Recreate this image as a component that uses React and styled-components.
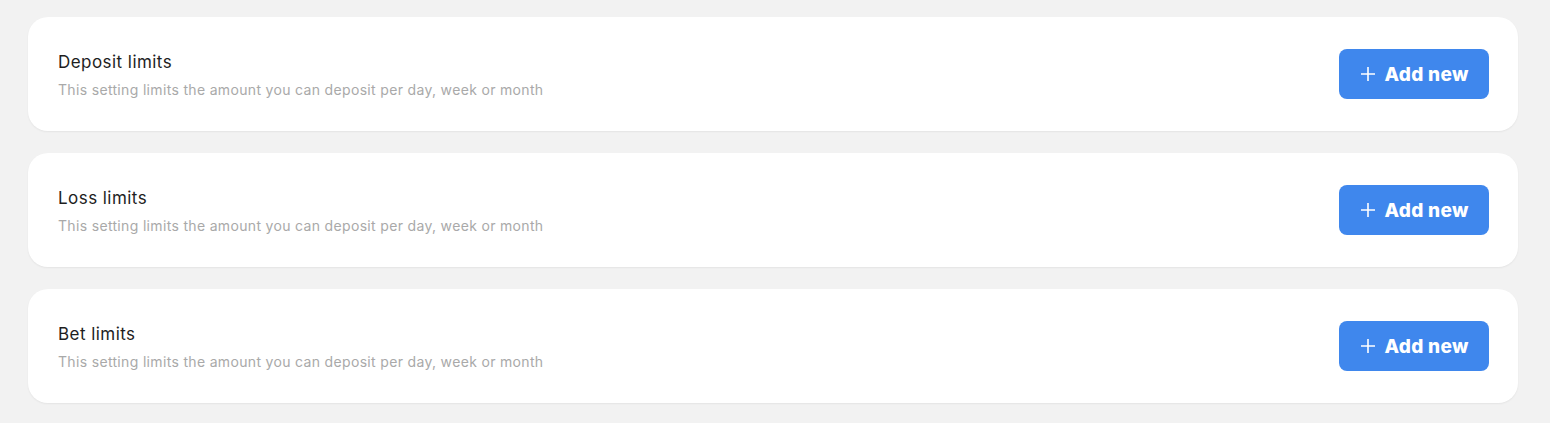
import React from "react";
import styled, { createGlobalStyle } from "styled-components";

const Global = createGlobalStyle`
  html, body { margin: 0; padding: 0; background: #f2f2f2; }
  body { font-family: Inter, "Noto Sans", "Liberation Sans", sans-serif; }
`;

const Page = styled.div`
  padding: 17px 32px 20px 28px;
  display: flex;
  flex-direction: column;
  gap: 22px;
`;

const Card = styled.div`
  background: #fff;
  border-radius: 20px;
  height: 114px;
  box-sizing: border-box;
  padding: 0 29px 0 30px;
  display: flex;
  align-items: center;
  justify-content: space-between;
  box-shadow: 0 1px 2px rgba(0, 0, 0, 0.06);
`;

const Texts = styled.div`
  display: flex;
  flex-direction: column;
  gap: 9px;
  margin-top: 3px;
`;

const Title = styled.div`
  font-size: 17px;
  color: #1e1e1e;
  line-height: 20px;
  letter-spacing: 0.45px;
`;

const Sub = styled.div`
  font-size: 14px;
  color: #a9a9a9;
  line-height: 18px;
  letter-spacing: 0.33px;
`;

const Button = styled.button`
  width: 150px;
  height: 50px;
  border: none;
  border-radius: 8px;
  background: #3f87ed;
  color: #fff;
  font-family: Inter, "Noto Sans", sans-serif;
  font-size: 19px;
  font-weight: 800;
  letter-spacing: 0.3px;
  display: flex;
  align-items: center;
  justify-content: center;
  gap: 8px;
  padding: 0 0 0 1px;
  cursor: pointer;
`;

const Plus = () => (
  <svg width="16" height="16" viewBox="0 0 16 16" fill="none">
    <path d="M8 1v14M1 8h14" stroke="#fff" strokeWidth="1.6" />
  </svg>
);

const items = ["Deposit limits", "Loss limits", "Bet limits"];

export default function App() {
  return (
    <>
      <Global />
      <Page>
        {items.map((t) => (
          <Card key={t}>
            <Texts>
              <Title>{t}</Title>
              <Sub>This setting limits the amount you can deposit per day, week or month</Sub>
            </Texts>
            <Button>
              <Plus />
              Add new
            </Button>
          </Card>
        ))}
      </Page>
    </>
  );
}
